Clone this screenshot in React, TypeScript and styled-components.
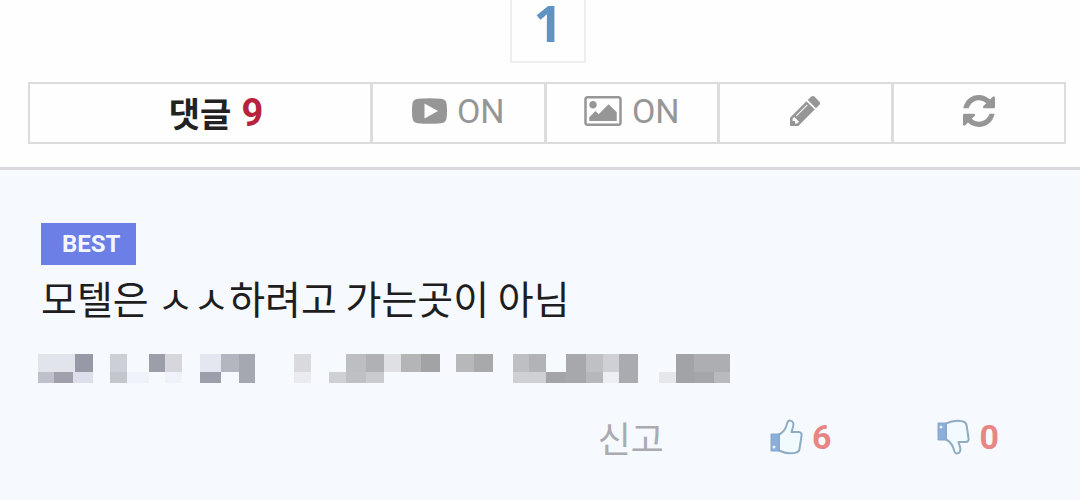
import React from "react";
import styled, { createGlobalStyle } from "styled-components";

const GlobalStyle = createGlobalStyle`
  *, *::before, *::after { box-sizing: border-box; }
  body {
    margin: 0;
    background: #fefefe;
    font-family: "Noto Sans CJK KR", "Noto Sans", sans-serif;
    color: #222;
  }
  #root { min-height: 100vh; display: flex; flex-direction: column; }
`;

const Pager = styled.nav`
  display: flex;
  justify-content: center;
  padding-left: 16px;
`;

const PageLink = styled.a`
  width: 76px;
  height: 63px;
  padding-bottom: 16px;
  display: flex;
  align-items: center;
  justify-content: center;
  border: 2px solid #eeeeee;
  border-top: 0;
  color: #5f93c4;
  font: 700 50px/48px "Noto Sans", sans-serif;
  text-decoration: none;
`;

const Toolbar = styled.div`
  display: grid;
  grid-template-columns: 49fr repeat(4, 25fr);
  height: 62px;
  margin: 19px 14px 0 28px;
  border: 2px solid #dcdcdc;
`;

const cell = `
  display: flex;
  align-items: center;
  justify-content: center;
  min-width: 0;
`;

const Heading = styled.h2`
  ${cell}
  gap: 10px;
  margin: 0;
  padding-left: 32px;
  font-size: 34px;
  line-height: 40px;
  font-weight: 700;
`;

const Count = styled.span`
  color: #b8223c;
  font: 700 38px/40px Roboto, sans-serif;
`;

const ToolButton = styled.button`
  ${cell}
  gap: 10px;
  padding: 0 0 4px;
  border: 0;
  border-left: 3px solid #dcdcdc;
  background: transparent;
  color: #969696;
  font: 400 34px/40px Roboto, sans-serif;
  cursor: pointer;
`;

const Comment = styled.article`
  flex: 1;
  margin-top: 23px;
  padding: 53px 81px 36px 41px;
  border-top: 3px solid #d9d9de;
  background: #f6f9fe;
`;

const Badge = styled.span`
  display: block;
  width: fit-content;
  padding: 0 16px 0 21px;
  background: #6b7fe6;
  color: #f2f6ff;
  font: 700 24px/42px Roboto, sans-serif;
`;

const Message = styled.p`
  margin: 6px 0 0;
  font-size: 39px;
  line-height: 52px;
  color: #1e1e20;
  white-space: nowrap;
`;

const Mosaic = styled.svg`
  display: block;
  margin: 31px 0 0 -3px;
`;

const Actions = styled.div`
  display: flex;
  justify-content: flex-end;
  align-items: center;
  gap: 106px;
  margin-top: 32px;
`;

const ActionButton = styled.button<{ $muted?: boolean }>`
  display: flex;
  align-items: center;
  gap: 9px;
  padding: 0;
  border: 0;
  background: transparent;
  color: ${(p) => (p.$muted ? "#a9abb0" : "#e88686")};
  font-family: ${(p) => (p.$muted ? '"Noto Sans CJK KR", sans-serif' : "Roboto, sans-serif")};
  font-weight: ${(p) => (p.$muted ? 400 : 700)};
  font-size: ${(p) => (p.$muted ? 36 : 34)}px;
  line-height: 44px;
  cursor: pointer;
`;

const PlayIcon = () => (
  <svg width="35" height="26" viewBox="0 0 35 26" fill="currentColor" aria-hidden="true">
    <path fillRule="evenodd" d="M6 .8Q17.5-.4 29 .8Q34 1.200 34.600 6Q35.400 13 34.600 20Q34 24.800 29 25.200Q17.500 26.400 6 25.200Q1 24.800.4 20Q-.4 13 .4 6Q1 1.200 6 .8ZM12.500 5.500V20.500L26 13Z" />
  </svg>
);

const PictureIcon = () => (
  <svg width="38" height="30" viewBox="-64 128 1920 1536" fill="currentColor" aria-hidden="true">
    <path d="M576 576q0 80-56 136t-136 56-136-56-56-136 56-136 136-56 136 56 56 136zm1024 384v448h-1408v-192l320-320 160 160 512-512zm96-704h-1600q-13 0-22.500 9.500t-9.500 22.500v1216q0 13 9.500 22.500t22.500 9.500h1600q13 0 22.500-9.500t9.500-22.500v-1216q0-13-9.500-22.500t-22.500-9.500zm160 32v1216q0 66-47 113t-113 47h-1600q-66 0-113-47t-47-113v-1216q0-66 47-113t113-47h1600q66 0 113 47t47 113z" />
  </svg>
);

const PencilIcon = () => (
  <svg width="30" height="30" viewBox="0 149 1515 1515" fill="currentColor" aria-hidden="true">
    <path d="M363 1536l91-91-235-235-91 91v107h128v128h107zm523-928q0-22-22-22-10 0-17 7l-542 542q-7 7-7 17 0 22 22 22 10 0 17-7l542-542q7-7 7-17zm-54-192l416 416-832 832h-416v-416zm683 96q0 53-37 90l-166 166-416-416 166-165q36-38 90-38 53 0 91 38l235 234q37 39 37 91z" />
  </svg>
);

const RefreshIcon = () => (
  <svg width="32" height="32" viewBox="0 0 1536 1536" fill="currentColor" aria-hidden="true">
    <path d="M1511 928q0 5-1 7-64 268-268 434.500t-478 166.500q-146 0-282.500-55t-243.500-157l-129 129q-19 19-45 19t-45-19-19-45v-448q0-26 19-45t45-19h448q26 0 45 19t19 45-19 45l-137 137q71 66 161 102t187 36q134 0 250-65t186-179q11-17 53-117 8-23 30-23h192q13 0 22.500 9.500t9.500 22.500zm25-800v448q0 26-19 45t-45 19h-448q-26 0-45-19t-19-45 19-45l138-138q-148-137-349-137-134 0-250 65t-186 179q-11 17-53 117-8 23-30 23h-199q-13 0-22.500-9.500t-9.500-22.500v-7q65-268 270-434.500t480-166.500q146 0 284 55.500t245 156.500l130-129q19-19 45-19t45 19 19 45z" />
  </svg>
);

const ThumbIcon = ({ down = false }: { down?: boolean }) => (
  <svg width="33" height="36" viewBox="0 0 33 36" aria-hidden="true">
    <g transform={down ? "matrix(1 0 0 -1 0 36)" : undefined}>
      <path d="M9 15.500C13 13.500 15.500 10 16.500 6.500C17.200 3.500 17.500 1.500 19.500 1.500C23 1.500 24 4.500 23 8L21.500 13H28.500C31 13 32 14.800 31.500 17L29.500 30C29 32.500 28 33.200 26 33.600C20 35 15 34.500 9 31.500Z" fill="#f0faff" stroke="#8facc0" strokeWidth="2" strokeLinejoin="round" />
      <path d="M1 15H9V32H1Z" fill="#8caedb" stroke="#86a6cb" strokeWidth="1" />
      <circle cx="4" cy="28" r="1.500" fill="#e8f2fc" />
    </g>
  </svg>
);

// Each block is [x, y, width, height, colour].
const TOP = 0;
const LOW = 18;
const blocks: [number, number, number, number, string][] = [
  [0, TOP, 37, 18, "#e2e4ec"], [37, TOP, 18, 18, "#9799a6"],
  [0, LOW, 16, 11, "#bfc1ca"], [16, LOW, 19, 11, "#9fa0ab"], [35, LOW, 20, 11, "#dde0ea"],
  [72, TOP, 17, 18, "#cdcfd7"], [72, LOW, 17, 11, "#c4c6ce"], [89, LOW, 22, 11, "#eff2f8"],
  [111, TOP, 16, 18, "#9c9ea9"], [127, TOP, 17, 18, "#d5d7dd"], [127, LOW, 17, 11, "#eff2f8"],
  [162, TOP, 21, 18, "#e4e7f0"], [162, LOW, 21, 11, "#9c9ea9"],
  [183, TOP, 18, 18, "#b4b6bf"], [201, TOP, 16, 29, "#a6a8b1"],
  [256, TOP, 17, 18, "#d9dade"], [256, LOW, 17, 11, "#e9ebf0"],
  [291, LOW, 17, 11, "#cfd0d4"], [308, TOP, 20, 18, "#bdbec2"], [308, LOW, 20, 11, "#bfc0c4"],
  [328, TOP, 18, 18, "#b0b1b5"], [328, LOW, 18, 11, "#cacbcf"],
  [346, TOP, 17, 18, "#dfe0e4"], [363, TOP, 20, 18, "#b4b5b7"], [383, TOP, 19, 18, "#a2a3a5"],
  [418, TOP, 18, 18, "#b7b8ba"], [436, TOP, 19, 18, "#a8a9ab"],
  [475, TOP, 16, 18, "#bebfc2"], [491, TOP, 17, 18, "#b2b3b6"], [475, LOW, 33, 11, "#cfd0d4"],
  [508, LOW, 20, 11, "#a3a4a7"], [528, TOP, 20, 29, "#a7a8ab"],
  [548, TOP, 17, 18, "#bfc0c4"], [548, LOW, 17, 11, "#b6b7ba"],
  [565, TOP, 16, 18, "#cfd0d5"], [565, LOW, 16, 11, "#eceef3"], [581, TOP, 19, 29, "#aaabb0"],
  [621, LOW, 17, 11, "#e6e7ea"], [638, TOP, 18, 29, "#a2a3a6"],
  [656, TOP, 36, 18, "#adaeb2"], [656, LOW, 20, 11, "#a5a6a9"], [676, LOW, 16, 11, "#b9babd"],
];

export default function App() {
  return (
    <>
      <GlobalStyle />
      <Pager>
        <PageLink href="#1">1</PageLink>
      </Pager>
      <Toolbar>
        <Heading>
          댓글 <Count>9</Count>
        </Heading>
        <ToolButton type="button"><PlayIcon />ON</ToolButton>
        <ToolButton type="button"><PictureIcon />ON</ToolButton>
        <ToolButton type="button" aria-label="댓글 쓰기"><PencilIcon /></ToolButton>
        <ToolButton type="button" aria-label="새로고침"><RefreshIcon /></ToolButton>
      </Toolbar>
      <Comment>
        <Badge>BEST</Badge>
        <Message>모텔은 ㅅㅅ하려고 가는곳이 아님</Message>
        <Mosaic width="692" height="29" viewBox="0 0 692 29" shapeRendering="crispEdges" aria-hidden="true">
          {blocks.map(([x, y, w, h, fill]) => (
            <rect key={`${x}-${y}`} x={x} y={y} width={w} height={h} fill={fill} />
          ))}
        </Mosaic>
        <Actions>
          <ActionButton type="button" $muted>신고</ActionButton>
          <ActionButton type="button"><ThumbIcon />6</ActionButton>
          <ActionButton type="button"><ThumbIcon down />0</ActionButton>
        </Actions>
      </Comment>
    </>
  );
}
